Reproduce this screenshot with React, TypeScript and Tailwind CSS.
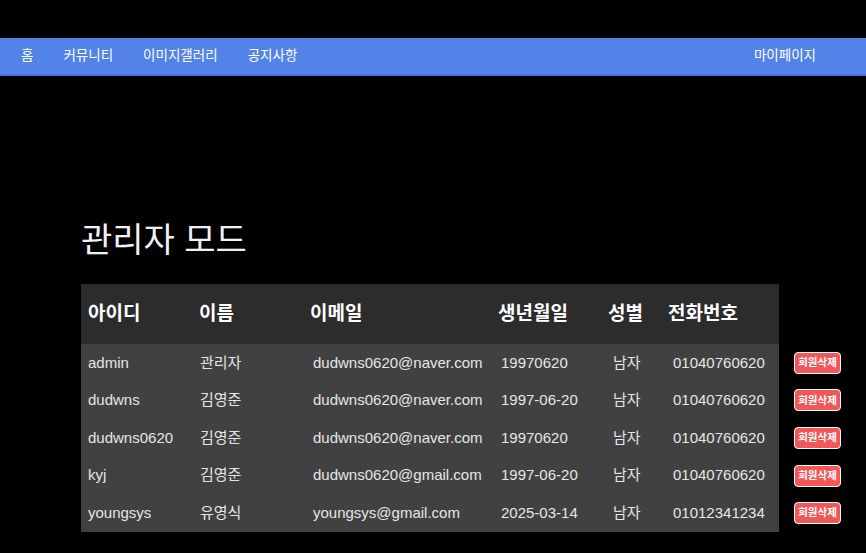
/**
 * App — admin mode member list.
 */
const font = { fontFamily: '"Liberation Sans", "Noto Sans CJK KR", sans-serif' };

interface Member {
  id: string;
  name: string;
  email: string;
  birth: string;
  gender: string;
  phone: string;
}

const members: Member[] = [
  { id: "admin", name: "관리자", email: "dudwns0620@naver.com", birth: "19970620", gender: "남자", phone: "01040760620" },
  { id: "dudwns", name: "김영준", email: "dudwns0620@naver.com", birth: "1997-06-20", gender: "남자", phone: "01040760620" },
  { id: "dudwns0620", name: "김영준", email: "dudwns0620@naver.com", birth: "19970620", gender: "남자", phone: "01040760620" },
  { id: "kyj", name: "김영준", email: "dudwns0620@gmail.com", birth: "1997-06-20", gender: "남자", phone: "01040760620" },
  { id: "youngsys", name: "유영식", email: "youngsys@gmail.com", birth: "2025-03-14", gender: "남자", phone: "01012341234" },
];

const headers = ["아이디", "이름", "이메일", "생년월일", "성별", "전화번호"];
const widths = ["w-[111px]", "w-[111px]", "w-[188px]", "w-[110px]", "w-[60px]", "w-[118px]"];
const bodyPad = ["pl-[7px]", "pl-[8px]", "pl-[10px]", "pl-[10px]", "pl-[12px]", "pl-[12px]"];

function NavBar() {
  return (
    <nav className="flex h-[38px] items-center justify-between border-b-2 border-[#4672d6] bg-[#5383e8] text-[13.5px] text-white">
      <ul className="flex pl-[6px]">
        {["홈", "커뮤니티", "이미지갤러리", "공지사항"].map((item) => (
          <li key={item} className="px-[15px]">{item}</li>
        ))}
      </ul>
      <div className="pr-[50px]">마이페이지</div>
    </nav>
  );
}

export default function App() {
  return (
    <div className="min-h-[553px] bg-black pt-[38px]" style={font}>
      <NavBar />
      <main className="px-[81px] pt-[143px]">
        <h1 className="text-[34px] leading-[42px] text-[#f2f2f2]">관리자 모드</h1>
        <table className="mt-[23px] w-[760px] table-fixed border-collapse">
          <thead>
            <tr className="h-[60px]">
              {headers.map((h, i) => (
                <th key={h} className={`${widths[i]} bg-[#2c2c2c] pl-[7px] text-left text-[19px] font-bold text-white`}>
                  {h}
                </th>
              ))}
              <th className="w-[62px]" />
            </tr>
          </thead>
          <tbody>
            {members.map((m) => {
              const cells = [m.id, m.name, m.email, m.birth, m.gender, m.phone];
              return (
                <tr key={m.id} className="h-[37.6px]">
                  {cells.map((c, i) => (
                    <td key={i} className={`${bodyPad[i]} bg-[#414141] p-0 text-[15px] text-[#e6e6e6]`}>
                      {c}
                    </td>
                  ))}
                  <td className="pl-[15px]">
                    <button className="flex h-[22px] w-[47px] items-center justify-center rounded-[4px] border border-white bg-[#f25757] text-[10.5px] font-bold text-white">
                      회원삭제
                    </button>
                  </td>
                </tr>
              );
            })}
          </tbody>
        </table>
      </main>
    </div>
  );
}
